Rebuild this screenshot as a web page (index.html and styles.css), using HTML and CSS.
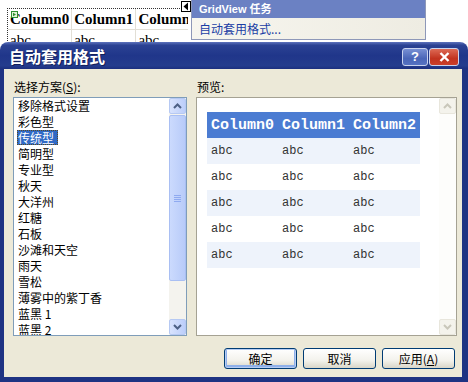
FILE: index.html
```html
<!DOCTYPE html>
<html lang="zh-CN">
<head>
    <meta charset="UTF-8">
    <title>自动套用格式</title>
    <link rel="stylesheet" href="styles.css">
</head>
<body>
    <!-- designer surface behind the dialog -->
    <div class="designer">
        <div class="grid-host">
            <table class="design-grid">
                <tr><th>Column0</th><th>Column1</th><th>Column2</th></tr>
                <tr><td>abc</td><td>abc</td><td>abc</td></tr>
            </table>
            <svg class="glyph-marker" width="7" height="7" viewBox="0 0 7 7">
                <rect x="0.5" y="0.5" width="6" height="6" fill="#e4f4d8" stroke="#2f8f2f"/>
                <path d="M2 1.8 L5 3.5 L2 5.2 Z" fill="#2f8f2f"/>
            </svg>
        </div>
        <span class="smart-tag">
            <svg width="8" height="9" viewBox="0 0 8 9"><path d="M6 0.5 L1.5 4.5 L6 8.5 Z" fill="#000"/></svg>
        </span>
        <div class="task-panel">
            <div class="task-head">GridView 任务</div>
            <div class="task-body"><a class="task-link">自动套用格式...</a></div>
        </div>
    </div>

    <div class="dialog">
        <div class="titlebar">
            <span class="title">自动套用格式</span>
            <div class="caption-btns">
                <span class="cap-btn cap-help">?</span>
                <span class="cap-btn cap-close">
                    <svg width="11" height="10" viewBox="0 0 11 10"><path d="M1.5 1 L9.5 9 M9.5 1 L1.5 9" stroke="#fff" stroke-width="2.4"/></svg>
                </span>
            </div>
        </div>

        <div class="client">
            <div class="panes">
                <div class="pane pane-left">
                    <div class="label">选择方案(<u>S</u>):</div>
                    <div class="listbox">
                        <ul class="items">
                            <li>移除格式设置</li>
                            <li>彩色型</li>
                            <li class="selected"><span>传统型</span></li>
                            <li>简明型</li>
                            <li>专业型</li>
                            <li>秋天</li>
                            <li>大洋州</li>
                            <li>红糖</li>
                            <li>石板</li>
                            <li>沙滩和天空</li>
                            <li>雨天</li>
                            <li>雪松</li>
                            <li>薄雾中的紫丁香</li>
                            <li>蓝黑 1</li>
                            <li>蓝黑 2</li>
                        </ul>
                        <div class="vscroll">
                            <span class="sb-btn">
                                <svg width="9" height="6" viewBox="0 0 9 6"><path d="M1 5 L4.5 1.5 L8 5" fill="none" stroke="#4d6185" stroke-width="2"/></svg>
                            </span>
                            <span class="sb-thumb">
                                <svg width="8" height="7" viewBox="0 0 8 7"><path d="M0 0.5 H7 M0 2.5 H7 M0 4.5 H7 M0 6.5 H7" stroke="#8faaf0" stroke-width="1"/></svg>
                            </span>
                            <span class="sb-track"></span>
                            <span class="sb-btn">
                                <svg width="9" height="6" viewBox="0 0 9 6"><path d="M1 1 L4.5 4.5 L8 1" fill="none" stroke="#4d6185" stroke-width="2"/></svg>
                            </span>
                        </div>
                    </div>
                </div>

                <div class="pane pane-right">
                    <div class="label">预览:</div>
                    <div class="preview">
                        <div class="preview-area">
                            <table class="preview-grid">
                                <tr><th>Column0</th><th>Column1</th><th>Column2</th></tr>
                                <tr class="alt"><td>abc</td><td>abc</td><td>abc</td></tr>
                                <tr><td>abc</td><td>abc</td><td>abc</td></tr>
                                <tr class="alt"><td>abc</td><td>abc</td><td>abc</td></tr>
                                <tr><td>abc</td><td>abc</td><td>abc</td></tr>
                                <tr class="alt"><td>abc</td><td>abc</td><td>abc</td></tr>
                            </table>
                        </div>
                        <div class="vscroll disabled">
                            <span class="sb-btn">
                                <svg width="9" height="6" viewBox="0 0 9 6"><path d="M1 5 L4.5 1.5 L8 5" fill="none" stroke="#c9c7ba" stroke-width="2"/></svg>
                            </span>
                            <span class="sb-track"></span>
                            <span class="sb-btn">
                                <svg width="9" height="6" viewBox="0 0 9 6"><path d="M1 1 L4.5 4.5 L8 1" fill="none" stroke="#c9c7ba" stroke-width="2"/></svg>
                            </span>
                        </div>
                    </div>
                </div>
            </div>

            <div class="buttons">
                <button class="btn btn-default">确定</button>
                <button class="btn">取消</button>
                <button class="btn">应用(<u>A</u>)</button>
            </div>
        </div>
    </div>
</body>
</html>
```

FILE: styles.css
```css
body {
    margin: 0;
    width: 468px;
    height: 382px;
    overflow: hidden;
    background: #fff;
    font-family: "Noto Sans CJK SC", "Liberation Sans", sans-serif;
    font-size: 12px;
    color: #000;
}

/* designer surface */
.designer {
    position: relative;
    height: 42px;
    overflow: hidden;
}

.grid-host {
    position: relative;
    margin: 8px 0 0 7px;
    width: 180px;
    height: 34px;
    overflow: hidden;
    border-top: 1px dotted #333;
    border-left: 1px dotted #333;
}

.design-grid {
    border-collapse: collapse;
    font-family: "Liberation Serif", serif;
    font-size: 15px;
}

.design-grid th,
.design-grid td {
    width: 59px;
    padding: 0 2px;
    height: 20px;
    text-align: left;
    border-right: 1px solid #e2dfd6;
    border-bottom: 1px solid #e2dfd6;
    white-space: nowrap;
}

.design-grid th {
    font-weight: bold;
}

.glyph-marker {
    position: absolute;
    left: 3px;
    top: 2px;
}

.smart-tag {
    position: absolute;
    left: 181px;
    top: 1px;
    width: 8px;
    height: 9px;
    border: 1px solid #000;
    background: #fff;
    display: flex;
    align-items: center;
    justify-content: center;
}

.task-panel {
    position: absolute;
    left: 191px;
    top: 0;
    width: 233px;
    height: 39px;
    border: 1px solid #8e98b8;
    border-top: none;
    background: linear-gradient(to right, #f7f6ef, #eeece2);
}

.task-head {
    height: 18px;
    line-height: 18px;
    padding-left: 7px;
    background: #6b81c3;
    color: #fff;
    font-family: "Liberation Sans", "Noto Sans CJK SC", sans-serif;
    font-weight: bold;
    font-size: 11px;
}

.task-body {
    padding: 3px 0 0 7px;
    line-height: 16px;
}

.task-link {
    color: #1b3ea5;
}

/* dialog window */
.dialog {
    width: 468px;
}

.titlebar {
    height: 27px;
    border-radius: 8px 8px 0 0;
    background: linear-gradient(#5d73bd, #2b4293 12%, #20368a 50%, #243c8d 88%, #1b2f7e);
    display: flex;
    align-items: center;
    justify-content: space-between;
    padding: 0 9px 0 9px;
    box-sizing: border-box;
}

.title {
    color: #fff;
    font-weight: bold;
    font-size: 16px;
    line-height: 20px;
    text-shadow: 1px 1px 0 #12205a;
}

.caption-btns {
    display: flex;
    gap: 1px;
    margin-top: 2px;
}

.cap-btn {
    height: 16px;
    border: 1px solid #c9d3ee;
    border-radius: 3px;
    display: flex;
    align-items: center;
    justify-content: center;
    color: #fff;
    font-weight: bold;
    font-family: "Liberation Sans", sans-serif;
    font-size: 13px;
}

.cap-help {
    width: 24px;
    background: linear-gradient(#7890d4, #4a66b8 60%, #5572c2);
}

.cap-close {
    width: 28px;
    background: linear-gradient(#dd6a55, #c2331f 60%, #cb3f2a);
}

.client {
    background: #ece9d8;
    border: solid #1e3383;
    border-width: 0 6px 5px 4px;
    padding: 10px 5px 8px 9px;
    box-sizing: border-box;
    height: 313px;
    display: flex;
    flex-direction: column;
}

.panes {
    display: flex;
    gap: 9px;
}

.pane {
    display: flex;
    flex-direction: column;
}

.pane-left {
    width: 174px;
}

.pane-right {
    width: 261px;
}

.label {
    height: 16px;
    line-height: 16px;
    margin-bottom: 2px;
    padding-left: 1px;
}

.listbox {
    height: 239px;
    box-sizing: border-box;
    border: 1px solid #7f9db9;
    background: #fff;
    display: flex;
    overflow: hidden;
}

.items {
    flex: 1;
    list-style: none;
    margin: 0;
    padding: 0 0 0 3px;
    overflow: hidden;
}

.items li {
    height: 16px;
    line-height: 16px;
    padding-left: 1px;
    white-space: nowrap;
}

.items li.selected {
    padding-left: 0;
}

.items li.selected span {
    display: inline-block;
    height: 15px;
    line-height: 15px;
    padding: 0 4px 0 1px;
    background: #316ac5;
    color: #fff;
    outline: 1px dotted #5a4a20;
    outline-offset: -1px;
}

/* XP style scroll bar */
.vscroll {
    width: 17px;
    display: flex;
    flex-direction: column;
    background: #f4f3ee;
}

.sb-btn {
    height: 16px;
    box-sizing: border-box;
    border: 1px solid #b6c9f3;
    border-radius: 2px;
    background: linear-gradient(to right, #d8e3fd, #bccefa);
    display: flex;
    align-items: center;
    justify-content: center;
}

.sb-thumb {
    height: 166px;
    box-sizing: border-box;
    margin-top: 1px;
    border: 1px solid #a9bff3;
    border-radius: 2px;
    background: linear-gradient(to right, #cbdafd, #b8cbf9);
    display: flex;
    align-items: center;
    justify-content: center;
}

.sb-track {
    flex: 1;
}

.vscroll.disabled {
    background: #fdfdfb;
}

.vscroll.disabled .sb-btn {
    border-color: #e8e6dc;
    background: #f4f3ec;
}

.preview {
    height: 239px;
    box-sizing: border-box;
    border: 1px solid #a5a293;
    background: #fff;
    display: flex;
}

.preview-area {
    flex: 1;
    padding: 14px 0 0 10px;
}

.preview-grid {
    border-collapse: collapse;
    font-family: "Liberation Mono", monospace;
}

.preview-grid th,
.preview-grid td {
    width: 67px;
    height: 26px;
    padding: 0 0 0 4px;
    text-align: left;
    white-space: nowrap;
}

.preview-grid th {
    background: #4b7cd2;
    color: #fff;
    font-weight: bold;
    font-size: 15px;
}

.preview-grid td {
    font-size: 12px;
    color: #333;
}

.preview-grid tr.alt td {
    background: #eef3fb;
}

.buttons {
    display: flex;
    justify-content: flex-end;
    gap: 6px;
    margin-top: 12px;
    padding-right: 2px;
}

.btn {
    width: 73px;
    height: 21px;
    padding: 0;
    border: 1px solid #003c74;
    border-radius: 3px;
    background: linear-gradient(#ffffff, #f3f2ec 60%, #d9d6c8);
    font-family: "Noto Sans CJK SC", "Liberation Sans", sans-serif;
    font-size: 12px;
    color: #000;
    line-height: 18px;
}

.btn-default {
    box-shadow: inset 0 0 0 1px #b7cdf3, inset 0 -1px 0 2px #8fb0ea;
}
```
